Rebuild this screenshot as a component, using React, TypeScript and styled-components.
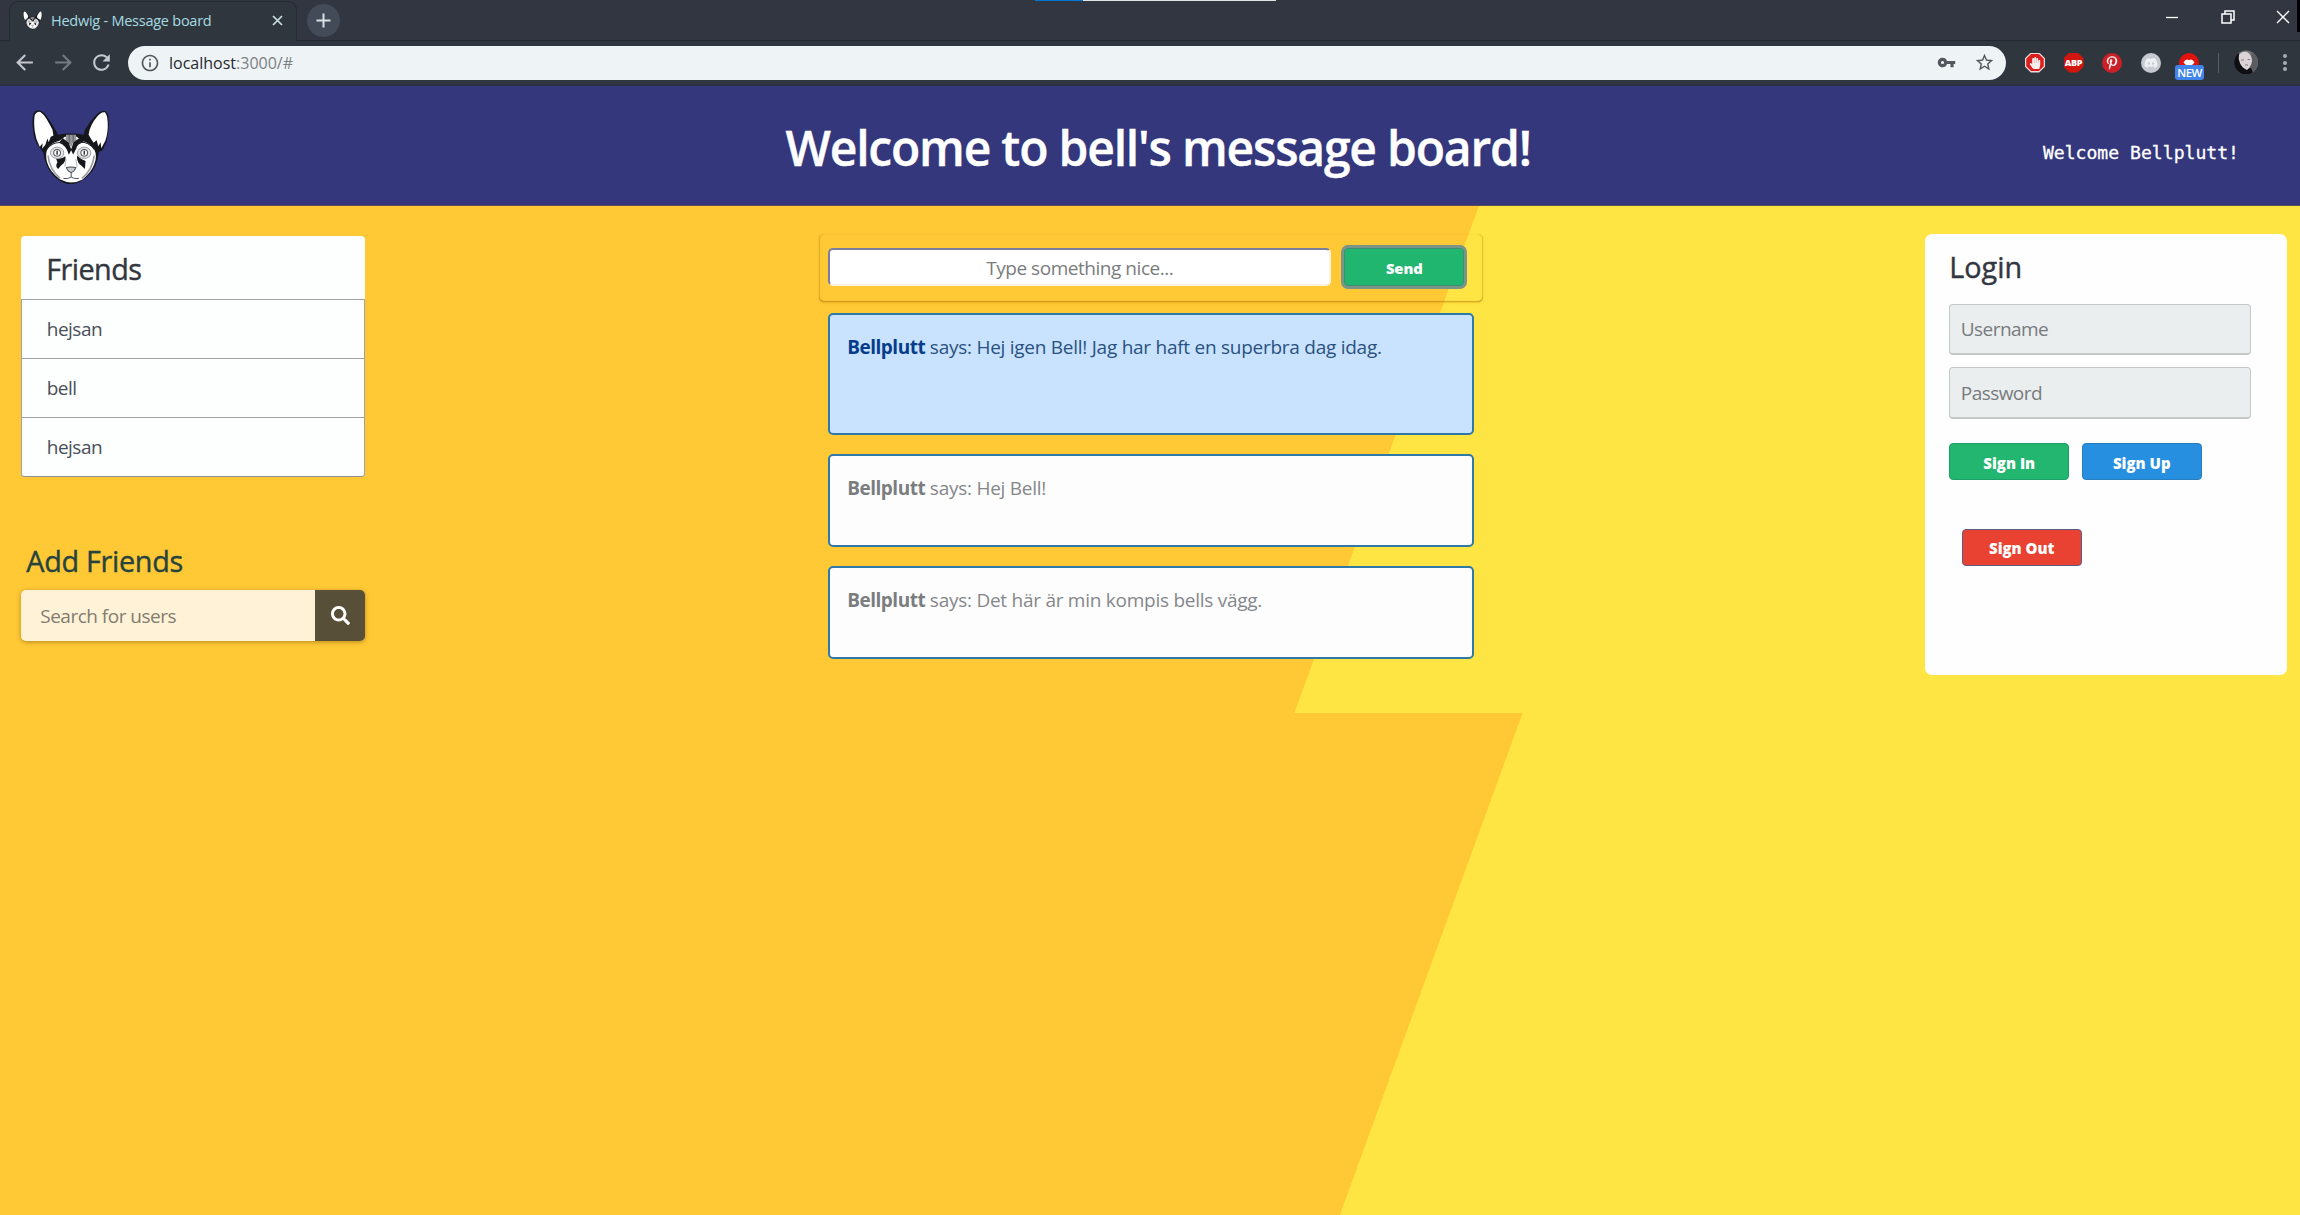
import React from "react";
import styled, { createGlobalStyle } from "styled-components";
import { MdArrowBack, MdArrowForward, MdRefresh, MdInfoOutline, MdVpnKey, MdStarBorder } from "react-icons/md";
import { FaSearch, FaPinterestP, FaDiscord, FaHandPaper } from "react-icons/fa";

const GlobalStyle = createGlobalStyle`
  *, *::before, *::after { box-sizing: border-box; }
  body {
    margin: 0;
    overflow: hidden;
    background: #ffc835;
    font-family: "Open Sans", "Noto Sans", sans-serif;
    font-size: 19px;
    color: #32373f;
  }
  input, button { font-family: inherit; }
  h1, h4, p { margin: 0; }
`;

const Window = styled.div`
  width: 2300px;
  height: 1215px;
  overflow: hidden;
  display: flex;
  flex-direction: column;
`;

/* ---------- browser frame ---------- */

const TabStrip = styled.div`
  position: relative;
  height: 41px;
  flex: none;
  display: flex;
  align-items: flex-start;
  padding-left: 9px;
  background: #313640;
  border-bottom: 1px solid #23272f;
`;

const Tab = styled.div`
  width: 288px;
  height: 41px;
  margin-top: 1px;
  display: flex;
  align-items: center;
  padding: 0 11px 3px 13px;
  background: #30363e;
  border: 1px solid #262a33;
  border-bottom: none;
  border-radius: 9px 9px 0 0;
`;

const TabTitle = styled.span`
  flex: 1;
  margin-left: 9px;
  font-size: 14.5px;
  letter-spacing: -0.25px;
  line-height: 20px;
  color: #a5dbe1;
  white-space: nowrap;
`;

const NewTab = styled.div`
  width: 33px;
  height: 33px;
  margin: 4px 0 0 10px;
  border-radius: 50%;
  background: #434b58;
  display: grid;
  place-items: center;
`;

const WindowControls = styled.div`
  margin-left: auto;
  height: 34px;
  display: flex;
  align-items: center;
  gap: 41.5px;
  padding-right: 10px;
`;

const Progress = styled.div`
  position: absolute;
  left: 1035px;
  top: 0;
  width: 241px;
  height: 1px;
  background: linear-gradient(90deg, #0177d7 48px, #dfe3e3 48px);
`;

const EdgeStrip = styled.div`
  position: absolute;
  right: 0;
  top: 0;
  width: 3px;
  height: 32px;
  background: #000;
`;

const Toolbar = styled.div`
  height: 45px;
  flex: none;
  display: flex;
  align-items: center;
  background: #30363e;
  border-bottom: 2px solid #2c2f45;
  padding: 0 5px 0 12px;
`;

const NavIcons = styled.div`
  width: 116px;
  display: flex;
  gap: 13.5px;
  color: #c5c9ce;
  svg { width: 25px; height: 25px; }
  svg:nth-child(2) { color: #767b82; }
`;

const Omnibox = styled.div`
  width: 1878px;
  height: 34px;
  border-radius: 17px;
  background: #eef3f6;
  display: flex;
  align-items: center;
  padding: 0 11px 0 11.5px;
`;

const UrlText = styled.span`
  flex: 1;
  margin-left: 9.5px;
  font-size: 16px;
  line-height: 22px;
  color: #7b8084;
  b { font-weight: 400; color: #26282c; }
`;

const OmniIcons = styled.div`
  display: flex;
  align-items: center;
  gap: 18.5px;
  color: #54585e;
`;

const Extensions = styled.div`
  display: flex;
  align-items: center;
  gap: 18.5px;
  margin-left: 19px;
`;

const RoundBadge = styled.div<{ $bg: string; $ink: string }>`
  width: 20px;
  height: 20px;
  border-radius: 50%;
  background: ${(p) => p.$bg};
  color: ${(p) => p.$ink};
  display: grid;
  place-items: center;
`;

const Octagon = styled.div<{ $rim?: boolean }>`
  width: 20px;
  height: 20px;
  clip-path: polygon(29% 0, 71% 0, 100% 29%, 100% 71%, 71% 100%, 29% 100%, 0 71%, 0 29%);
  background: ${(p) => (p.$rim ? "#ead9d9" : "#d2150f")};
  color: #f5eeee;
  display: grid;
  place-items: center;
`;

const OctagonCore = styled(Octagon)`
  width: 17.5px;
  height: 17.5px;
  background: #dc1d1d;
`;

const AbpText = styled.span`
  font-size: 9px;
  line-height: 10px;
  font-weight: 800;
  letter-spacing: -0.3px;
  color: #fff;
`;

const NewExtension = styled.div`
  position: relative;
  width: 20px;
  height: 20px;
`;

const NewLabel = styled.span`
  position: absolute;
  left: -4px;
  top: 12px;
  width: 29px;
  height: 15px;
  border-radius: 3px;
  background: #4285ea;
  color: #fff;
  font-size: 11.5px;
  font-weight: 600;
  letter-spacing: -0.6px;
  line-height: 15px;
  text-align: center;
`;

const Divider = styled.div`
  width: 1px;
  height: 20px;
  margin: 0 15px 0 19px;
  background: #565c66;
`;

const MenuDots = styled.div`
  margin: 0 0 0 auto;
  display: flex;
  flex-direction: column;
  gap: 2.5px;
  width: 20px;
  align-items: center;
  i { width: 4px; height: 4px; border-radius: 50%; background: #a9adb3; }
`;

/* ---------- page ---------- */

const Page = styled.div`
  flex: 1;
  background: linear-gradient(110deg, #ffc835 1430.5px, #ffe544 1431px) 0 0 / 2300px 627px repeat-y;
`;

const Header = styled.header`
  height: 120px;
  display: grid;
  grid-template-columns: 754px 744px 1fr;
  align-items: center;
  padding: 3px 61px 0 31.5px;
  background: #34377c;
  border-bottom: 1px solid #5f4d55;
`;

const Title = styled.h1`
  margin-top: 2px;
  font-size: 48px;
  line-height: 58px;
  font-weight: 600;
  letter-spacing: -1.2px;
  color: #fff;
  white-space: nowrap;
  -webkit-text-stroke: 0.4px #fff;
`;

const Greeting = styled.span`
  justify-self: end;
  font-family: "DejaVu Sans Mono", monospace;
  font-size: 18.1px;
  line-height: 24px;
  margin-top: 11px;
  color: #fff;
  -webkit-text-stroke: 0.3px #fff;
`;

const Columns = styled.main`
  display: grid;
  grid-template-columns: 797.5px 1106.5px 361.5px;
  align-items: start;
  padding: 27.5px 0 0 21.25px;
`;

const Sidebar = styled.aside`
  width: 344px;
  margin-top: 2px;
`;

const FriendList = styled.div`
  height: 241px;
  border-radius: 4px;
  background: #fdfefe;
  border-bottom: 1px solid #8f9194;
`;

const CardTitle = styled.h4`
  font-size: 28.8px;
  line-height: 34px;
  font-weight: 500;
  letter-spacing: -0.55px;
  -webkit-text-stroke: 0.4px currentColor;
`;

const FriendHeader = styled.div`
  height: 63px;
  padding: 16px 0 0 25px;
`;

const FriendRow = styled.div`
  height: 59px;
  padding: 0 24.5px;
  border: 1px solid #a0a2a4;
  border-bottom: none;
  line-height: 59px;
  letter-spacing: -0.5px;
  color: #4a4f57;
`;

const AddTitle = styled(CardTitle)`
  margin: 67px 0 12.5px 5px;
  letter-spacing: -0.3px;
  color: #26433f;
`;

const SearchBar = styled.div`
  height: 51px;
  display: flex;
  border-radius: 5px;
  overflow: hidden;
  box-shadow: 0 1px 4px rgba(110, 75, 0, 0.5);
`;

const SearchInput = styled.input`
  width: 294px;
  border: none;
  padding: 0 19px;
  background: #fff2d7;
  font-size: 19px;
  letter-spacing: -0.5px;
  &::placeholder { color: #827d70; opacity: 1; }
`;

const SearchButton = styled.button`
  flex: 1;
  border: none;
  padding: 0;
  background: #574f38;
  color: #fff;
  display: grid;
  place-items: center;
`;

const Feed = styled.section`
  width: 664.5px;
  display: flex;
  flex-direction: column;
`;

const Composer = styled.form`
  height: 68.5px;
  display: flex;
  align-items: center;
  padding: 0 16px 1px 9.5px;
  border-radius: 5px;
  margin-bottom: 10.5px;
  box-shadow: inset 0 -1px 1px rgba(150, 95, 0, 0.45), inset 1px 0 1px rgba(150, 95, 0, 0.22), inset -1px 0 1px rgba(150, 95, 0, 0.22), 0 1px 2px rgba(190, 120, 0, 0.3);
`;

const ComposeInput = styled.input`
  width: 503px;
  height: 38px;
  padding: 1px 0 0;
  border: 2px solid;
  border-color: #7b7f9d #fff2e0 #fff2e0 #7b7f9d;
  border-radius: 5px;
  background: #fff;
  text-align: center;
  font-size: 19px;
  letter-spacing: -0.46px;
  &::placeholder { color: #7a7c7e; opacity: 1; }
`;

const Button = styled.button<{ $bg: string; $edge: string }>`
  width: 120px;
  height: 37px;
  border: 1.5px solid ${(p) => p.$edge};
  border-radius: 4px;
  background: ${(p) => p.$bg};
  color: #fff;
  font-size: 15px;
  font-weight: 800;
  line-height: 20px;
  padding: 2px 0 0;
`;

const SendButton = styled(Button)`
  height: 38px;
  margin-left: 13px;
  padding-top: 1px;
  font-size: 14.8px;
  letter-spacing: -0.1px;
  box-shadow: 0 0 0 3px #799589;
`;

const Message = styled.article<{ $fresh?: boolean }>`
  width: 646px;
  height: ${(p) => (p.$fresh ? 122 : 93)}px;
  margin: 0 0 19px 9px;
  padding: 18.5px 17.5px;
  border: 2px solid #2f79a8;
  border-radius: 5px;
  background: ${(p) => (p.$fresh ? "#c9e3fe" : "#fdfdfe")};
  color: ${(p) => (p.$fresh ? "#2a517f" : "#85878a")};
  line-height: 28px;
  letter-spacing: -0.26px;
  white-space: pre;
  b {
    font-weight: 700;
    letter-spacing: -0.5px;
    color: ${(p) => (p.$fresh ? "#063c8a" : "#7b7d7f")};
  }
`;

const LoginCard = styled.section`
  height: 441.5px;
  padding: 16px 36px 0 24px;
  border-radius: 7px;
  background: #fefefe;
`;

const LoginTitle = styled(CardTitle)`
  letter-spacing: 0;
  margin-bottom: 20px;
`;

const Field = styled.input`
  display: block;
  width: 301.5px;
  height: 51.5px;
  margin-bottom: 12px;
  padding: 1px 11px 0 10.5px;
  border: 1px solid #c6c8c8;
  border-bottom-width: 2px;
  border-radius: 4px;
  background: #ebeeee;
  font-size: 19px;
  letter-spacing: -0.55px;
  &::placeholder { color: #777b7e; opacity: 1; }
`;

const Actions = styled.div`
  display: flex;
  gap: 12.5px;
  margin-top: 24.5px;
`;

const SignOutRow = styled.div`
  margin: 48.5px 0 0 12.5px;
`;

function CatMark({ width }: { width: number }) {
  return (
    <svg width={width} height={width * 0.974} viewBox="36 32 230 224">
      <path d="M40 44Q48 30 62 34Q72 38 82 54Q97 76 110 98L114 106Q150 98 190 106L194 92Q208 66 228 46Q240 34 252 34Q263 36 265 56Q268 96 258 128L246 154L236 157Q231 204 204 228Q186 248 152 255Q120 250 98 226Q76 202 70 160L60 146Q44 128 40 100Q35 66 40 44Z" fill="#15171b" />
      <path d="M44 48Q50 35 61 38Q71 44 80 60Q90 78 97 90L100 108L92 112L86 128L82 117L76 136L66 148L68 131L59 142Q47 120 44 94Q41 66 44 48Z" fill="#fff" />
      <path d="M232 50Q244 36 254 39Q261 48 262 66Q264 98 255 124L243 146L241 128L234 140L229 122L220 130L212 118L205 106Q208 78 232 50Z" fill="#fff" />
      <path d="M82 148Q92 130 118 124L134 112L170 112L184 124Q208 130 222 150Q232 170 222 194Q213 219 186 240Q153 257 119 239Q89 216 81 188Q75 164 82 148Z" fill="#fff" />
      <path d="M138 106H167L170 128L160 126L153 144L145 126L135 130Z" fill="#94979a" />
      <path d="M147 107V134M159 107V130" stroke="#5a5d62" strokeWidth="3" />
      <path d="M128 116Q138 126 145 128L153 149L160 128L178 116L192 128Q170 132 168 148L159 165L153 152L146 166Q138 136 116 130Z" fill="#15171b" />
      <path d="M80 150Q98 124 128 130M222 150Q205 126 176 128" fill="none" stroke="#26292e" strokeWidth="3" />
      <path d="M108 178Q122 180 136 170Q138 188 124 196L114 208Q104 200 112 188ZM170 168Q182 180 196 184L194 208L183 198Q170 190 170 168Z" fill="#15171b" />
      <path d="M84 168Q88 210 120 236M222 168Q216 212 185 236" fill="none" stroke="#9a9da1" strokeWidth="5" />
      <ellipse cx="111" cy="160" rx="20" ry="17" fill="#e2e4e5" stroke="#8b8e92" strokeWidth="2.5" />
      <ellipse cx="192" cy="160" rx="20" ry="17" fill="#e2e4e5" stroke="#8b8e92" strokeWidth="2.5" />
      <circle cx="111" cy="160" r="10" fill="#fff" stroke="#4c5055" strokeWidth="3" />
      <circle cx="192" cy="160" r="10" fill="#fff" stroke="#4c5055" strokeWidth="3" />
      <path d="M111 154V166M192 154V166" stroke="#222" strokeWidth="4" />
      <path d="M138 178L134 202M167 178L171 202" stroke="#b4b7ba" strokeWidth="3" />
      <path d="M139 204Q152 200 167 204Q162 216 153 219Q143 216 139 204Z" fill="#c9ccce" stroke="#4a4d52" strokeWidth="3" />
      <path d="M153 220V232M130 236Q144 239 153 232Q163 239 176 236" fill="none" stroke="#4a4d52" strokeWidth="3" />
      <path d="M137 245Q153 252 169 245L153 251Z" fill="#6a6e74" />
    </svg>
  );
}

function Controls() {
  return (
    <WindowControls>
      <svg width="14" height="14" viewBox="0 0 14 14" stroke="#fff" strokeWidth="1.3"><path d="M1 7.5H13" /></svg>
      <svg width="14" height="14" viewBox="0 0 14 14" fill="none" stroke="#fff" strokeWidth="1.5">
        <path d="M1 4H10V13H1ZM4 4V1H13V10H10" />
      </svg>
      <svg width="14" height="14" viewBox="0 0 14 14" stroke="#fff" strokeWidth="1.4"><path d="M1 1L13 13M13 1L1 13" /></svg>
    </WindowControls>
  );
}

function Avatar() {
  return (
    <svg width="24" height="25" viewBox="0 0 24 25">
      <defs>
        <clipPath id="face"><circle cx="12" cy="12.5" r="12" /></clipPath>
      </defs>
      <g clipPath="url(#face)">
        <rect width="24" height="25" fill="#77787a" />
        <path d="M18 0H24V25H15Z" fill="#5b5d61" />
        <path d="M0 5L5 3L6 13Q9 20 17 18L20 25H0Z" fill="#0f0f14" />
        <path d="M5 5Q8 1 13 2Q18 5 18 11Q17 17 13 20Q8 18 6 13Q4 9 5 5Z" fill="#dcd5d8" />
        <path d="M7 10H10M13.5 9.5H16M11 15H14" stroke="#85757e" strokeWidth="1.1" />
      </g>
    </svg>
  );
}

const friends = ["hejsan", "bell", "hejsan"];
const messages = [
  { from: "Bellplutt", text: "Hej igen Bell! Jag har haft en superbra dag idag.", fresh: true },
  { from: "Bellplutt", text: "Hej Bell!", fresh: false },
  { from: "Bellplutt", text: "Det här är min kompis bells vägg.", fresh: false },
];

export default function App() {
  return (
    <Window>
      <GlobalStyle />
      <TabStrip>
        <Tab>
          <CatMark width={19} />
          <TabTitle>Hedwig - Message board</TabTitle>
          <svg width="15" height="15" viewBox="0 0 15 15" stroke="#c8dfe2" strokeWidth="1.7"><path d="M3 3L12 12M12 3L3 12" /></svg>
        </Tab>
        <NewTab>
          <svg width="15" height="15" viewBox="0 0 15 15" stroke="#d8e2e5" strokeWidth="2"><path d="M7.5 0.5V14.5M0.5 7.5H14.5" /></svg>
        </NewTab>
        <Controls />
        <Progress />
        <EdgeStrip />
      </TabStrip>
      <Toolbar>
        <NavIcons>
          <MdArrowBack />
          <MdArrowForward />
          <MdRefresh />
        </NavIcons>
        <Omnibox>
          <MdInfoOutline size={20} color="#54585e" />
          <UrlText><b>localhost</b>:3000/#</UrlText>
          <OmniIcons>
            <MdVpnKey size={19} />
            <MdStarBorder size={21} />
          </OmniIcons>
        </Omnibox>
        <Extensions>
          <Octagon $rim><OctagonCore><FaHandPaper size={12} /></OctagonCore></Octagon>
          <Octagon><AbpText>ABP</AbpText></Octagon>
          <RoundBadge $bg="#cb2027" $ink="#f6eaea"><FaPinterestP size={14} /></RoundBadge>
          <RoundBadge $bg="#c6c9d0" $ink="#edf0f3"><FaDiscord size={14} /></RoundBadge>
          <NewExtension>
            <svg width="20" height="20" viewBox="0 0 20 20">
              <circle cx="10" cy="10" r="10" fill="#e2120e" />
              <path d="M4.5 9.5Q7 5 10 7.3Q13 5 15.5 9.5Q13 13 10 12.5Q7 13 4.5 9.5Z" fill="#fff" />
            </svg>
            <NewLabel>NEW</NewLabel>
          </NewExtension>
        </Extensions>
        <Divider />
        <Avatar />
        <MenuDots><i /><i /><i /></MenuDots>
      </Toolbar>
      <Page>
        <Header>
          <CatMark width={77} />
          <Title>Welcome to bell's message board!</Title>
          <Greeting>Welcome Bellplutt!</Greeting>
        </Header>
        <Columns>
          <Sidebar>
            <FriendList>
              <FriendHeader><CardTitle>Friends</CardTitle></FriendHeader>
              {friends.map((name, i) => (
                <FriendRow key={i}>{name}</FriendRow>
              ))}
            </FriendList>
            <AddTitle>Add Friends</AddTitle>
            <SearchBar>
              <SearchInput placeholder="Search for users" />
              <SearchButton><FaSearch size={19} /></SearchButton>
            </SearchBar>
          </Sidebar>
          <Feed>
            <Composer>
              <ComposeInput placeholder="Type something nice..." />
              <SendButton type="button" $bg="#21b66f" $edge="#3e8f72">Send</SendButton>
            </Composer>
            {messages.map((m) => (
              <Message key={m.text} $fresh={m.fresh}><b>{m.from}</b> says: {m.text}</Message>
            ))}
          </Feed>
          <LoginCard>
            <LoginTitle>Login</LoginTitle>
            <Field placeholder="Username" />
            <Field placeholder="Password" />
            <Actions>
              <Button $bg="#22b670" $edge="#1f9f68">Sign In</Button>
              <Button $bg="#268fe0" $edge="#2a7dbd">Sign Up</Button>
            </Actions>
            <SignOutRow>
              <Button $bg="#e94233" $edge="#5a5f86">Sign Out</Button>
            </SignOutRow>
          </LoginCard>
        </Columns>
      </Page>
    </Window>
  );
}
